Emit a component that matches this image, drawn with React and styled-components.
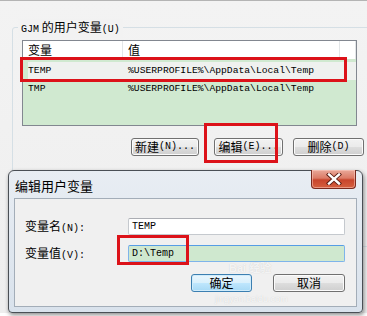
import React from "react";
import styled, { createGlobalStyle } from "styled-components";

const GlobalStyle = createGlobalStyle`
  html, body {
    margin: 0;
    padding: 0;
    background: #ffffff;
  }
  body {
    font-family: "Noto Sans CJK SC", "Liberation Sans", sans-serif;
    color: #000;
  }
`;

const Desktop = styled.div`
  position: relative;
  width: 367px;
  height: 316px;
  overflow: hidden;
  background: #ffffff;
`;

const MainWindow = styled.div`
  height: 313px;
  box-sizing: border-box;
  border-top: 1px solid #b4b4b4;
  background: linear-gradient(to bottom, #f3f3f3, #eeeeee);
  padding: 26px 0 0 12px;
`;

const GroupBox = styled.div`
  position: relative;
  width: 370px;
  height: 220px;
  box-sizing: border-box;
  border: 1px solid #d5dfe5;
  border-radius: 3px;
  padding: 12px 0 0 9px;
`;

const Legend = styled.span`
  position: absolute;
  top: -9px;
  left: 5px;
  padding: 0 3px;
  background: #f2f2f2;
  font-size: 12px;
  line-height: 16px;
  white-space: nowrap;
`;

const Ascii = styled.span`
  font-family: "Liberation Mono", monospace;
  font-size: 10px;
`;

const ListBox = styled.div`
  width: 335px;
  height: 86px;
  box-sizing: border-box;
  border: 1px solid #828790;
  background: #d0e9d0;
`;

const columns = "100px 217px 1fr";

const Header = styled.div`
  display: grid;
  grid-template-columns: ${columns};
  height: 18px;
  background: #ffffff;
`;

const HeaderCell = styled.div`
  font-size: 12px;
  line-height: 18px;
  padding-left: 5px;
  border-right: 1px solid #e3e6e8;
`;

const Body = styled.div`
  padding-top: 3px;
`;

const Row = styled.div`
  display: grid;
  grid-template-columns: ${columns};
  height: 18px;
  background: ${(p) =>
    p.$selected
      ? "linear-gradient(to right, transparent 5px, #eff1ef 5px)"
      : "transparent"};
`;

const Cell = styled.div`
  font-family: "Liberation Mono", monospace;
  font-size: 9.7px;
  line-height: 18px;
  padding-left: 5px;
  white-space: nowrap;
`;

const ButtonRow = styled.div`
  display: flex;
  margin-top: 12px;
  padding-left: ${(p) => p.$indent || 0}px;
  justify-content: ${(p) => (p.$end ? "flex-end" : "flex-start")};
`;

const Button = styled.div`
  width: ${(p) => p.$w}px;
  margin-left: ${(p) => p.$ml || 0}px;
  height: 18px;
  box-sizing: border-box;
  border: 1px solid ${(p) => (p.$default ? "#3c7fb1" : "#707070")};
  border-radius: 3px;
  background: ${(p) =>
    p.$default
      ? "linear-gradient(to bottom, #eaf6fd 0%, #d9f0fc 48%, #bee6fd 52%, #a7d9f5 100%)"
      : "linear-gradient(to bottom, #f2f2f2 0%, #ebebeb 48%, #dddddd 52%, #cfcfcf 100%)"};
  box-shadow: inset 0 0 0 1px ${(p) => (p.$default ? "#d0ecfb" : "#fbfbfb")};
  display: flex;
  align-items: center;
  justify-content: center;
  font-size: 12px;
  line-height: 16px;
  white-space: nowrap;
`;

const RedBox = styled.div`
  position: absolute;
  left: ${(p) => p.$x}px;
  top: ${(p) => p.$y}px;
  width: ${(p) => p.$w}px;
  height: ${(p) => p.$h}px;
  box-sizing: border-box;
  border: 3px solid #dc1219;
  pointer-events: none;
`;

const Dialog = styled.div`
  position: absolute;
  left: 8px;
  top: 170px;
  width: 355px;
  height: 143px;
  box-sizing: border-box;
  border: 1px solid #4a4f55;
  border-radius: 6px 6px 4px 4px;
  background: linear-gradient(to bottom, #e8edf3, #d9e2ec);
  box-shadow: 1px 2px 4px rgba(0, 0, 0, 0.45);
  padding: 0 5px 5px 5px;
  display: flex;
  flex-direction: column;
`;

const TitleBar = styled.div`
  display: flex;
  justify-content: space-between;
  align-items: flex-start;
  height: 27px;
  flex-shrink: 0;
`;

const Title = styled.div`
  font-size: 13px;
  line-height: 15px;
  padding: 7px 0 0 1px;
  color: #000;
`;

const CloseButton = styled.div`
  width: 45px;
  height: 19px;
  margin-top: -1px;
  margin-right: 1px;
  box-sizing: border-box;
  border: 1px solid #7a2a1e;
  border-top: none;
  border-radius: 0 0 4px 4px;
  background: linear-gradient(
    to bottom,
    #e9a899 0%,
    #dc7b66 45%,
    #c8452c 55%,
    #d5603f 100%
  );
  box-shadow: inset 0 0 0 1px rgba(255, 210, 200, 0.5);
  display: flex;
  align-items: center;
  justify-content: center;
`;

const Client = styled.div`
  flex: 1;
  box-sizing: border-box;
  border: 1px solid #a3adb8;
  background: #f0f0f0;
  padding: 19px 11px 0 10px;
  position: relative;
`;

const FormRow = styled.div`
  display: flex;
  align-items: center;
  height: 17px;
  margin-bottom: 10px;
`;

const Label = styled.div`
  width: 103px;
  font-size: 12px;
  line-height: 17px;
  white-space: nowrap;
`;

const Input = styled.div`
  width: 217px;
  height: 17px;
  box-sizing: border-box;
  border: 1px solid ${(p) => (p.$focused ? "#7eb4ea" : "#c5c9ce")};
  border-top-color: ${(p) => (p.$focused ? "#569de5" : "#abadb3")};
  border-radius: 2px;
  background: ${(p) => (p.$green ? "#cfe8cf" : "#ffffff")};
  font-family: "Liberation Mono", monospace;
  font-size: 10px;
  line-height: 15px;
  padding-left: 3px;
`;

const WatermarkMark = styled.div`
  position: absolute;
  left: 214px;
  top: 63px;
  font-family: "Liberation Sans", "Noto Sans CJK SC", sans-serif;
  font-weight: bold;
  font-size: 11px;
  line-height: 12px;
  color: rgba(255, 255, 255, 0.75);
  text-shadow: 0 0 1px rgba(150, 150, 150, 0.4);
  pointer-events: none;
`;

const WatermarkUrl = styled.div`
  position: absolute;
  left: 200px;
  top: 95px;
  font-family: "Liberation Sans", sans-serif;
  font-size: 9px;
  line-height: 10px;
  color: rgba(255, 255, 255, 0.8);
  text-shadow: 0 0 1px rgba(150, 150, 150, 0.4);
  pointer-events: none;
`;

function CloseIcon() {
  return (
    <svg width="16" height="12" viewBox="0 0 16 12">
      <path
        d="M3 1.5 L13 10.5 M13 1.5 L3 10.5"
        stroke="#5a1c12"
        strokeWidth="4.2"
        strokeLinecap="square"
      />
      <path
        d="M3 1.5 L13 10.5 M13 1.5 L3 10.5"
        stroke="#ffffff"
        strokeWidth="2.4"
        strokeLinecap="square"
      />
    </svg>
  );
}

const variables = [
  { name: "TEMP", value: "%USERPROFILE%\\AppData\\Local\\Temp", selected: true },
  { name: "TMP", value: "%USERPROFILE%\\AppData\\Local\\Temp" },
];

export default function App() {
  return (
    <Desktop>
      <GlobalStyle />
      <MainWindow>
        <GroupBox>
          <Legend>
            <Ascii>GJM</Ascii> 的用户变量<Ascii>(U)</Ascii>
          </Legend>
          <ListBox>
            <Header>
              <HeaderCell>变量</HeaderCell>
              <HeaderCell>值</HeaderCell>
              <HeaderCell />
            </Header>
            <Body>
              {variables.map((v) => (
                <Row key={v.name} $selected={v.selected}>
                  <Cell>{v.name}</Cell>
                  <Cell>{v.value}</Cell>
                </Row>
              ))}
            </Body>
          </ListBox>
          <ButtonRow $indent={109}>
            <Button $w={68}>
              新建<Ascii>(N)...</Ascii>
            </Button>
            <Button $w={69} $ml={15}>
              编辑<Ascii>(E)...</Ascii>
            </Button>
            <Button $w={71} $ml={10}>
              删除<Ascii>(D)</Ascii>
            </Button>
          </ButtonRow>
        </GroupBox>
      </MainWindow>

      <RedBox $x={20} $y={57} $w={327} $h={25} />
      <RedBox $x={204} $y={123} $w={74} $h={40} />

      <Dialog>
        <TitleBar>
          <Title>编辑用户变量</Title>
          <CloseButton>
            <CloseIcon />
          </CloseButton>
        </TitleBar>
        <Client>
          <FormRow>
            <Label>
              变量名<Ascii>(N):</Ascii>
            </Label>
            <Input>TEMP</Input>
          </FormRow>
          <FormRow>
            <Label>
              变量值<Ascii>(V):</Ascii>
            </Label>
            <Input $green $focused>
              D:\Temp
            </Input>
          </FormRow>
          <ButtonRow $end>
            <Button $w={61} $default>
              确定
            </Button>
            <Button $w={72} $ml={21}>
              取消
            </Button>
          </ButtonRow>
          <WatermarkMark>Bai 经验</WatermarkMark>
          <WatermarkUrl>jingyan.baidu.com</WatermarkUrl>
        </Client>
      </Dialog>

      <RedBox $x={117} $y={235} $w={72} $h={30} />
    </Desktop>
  );
}
